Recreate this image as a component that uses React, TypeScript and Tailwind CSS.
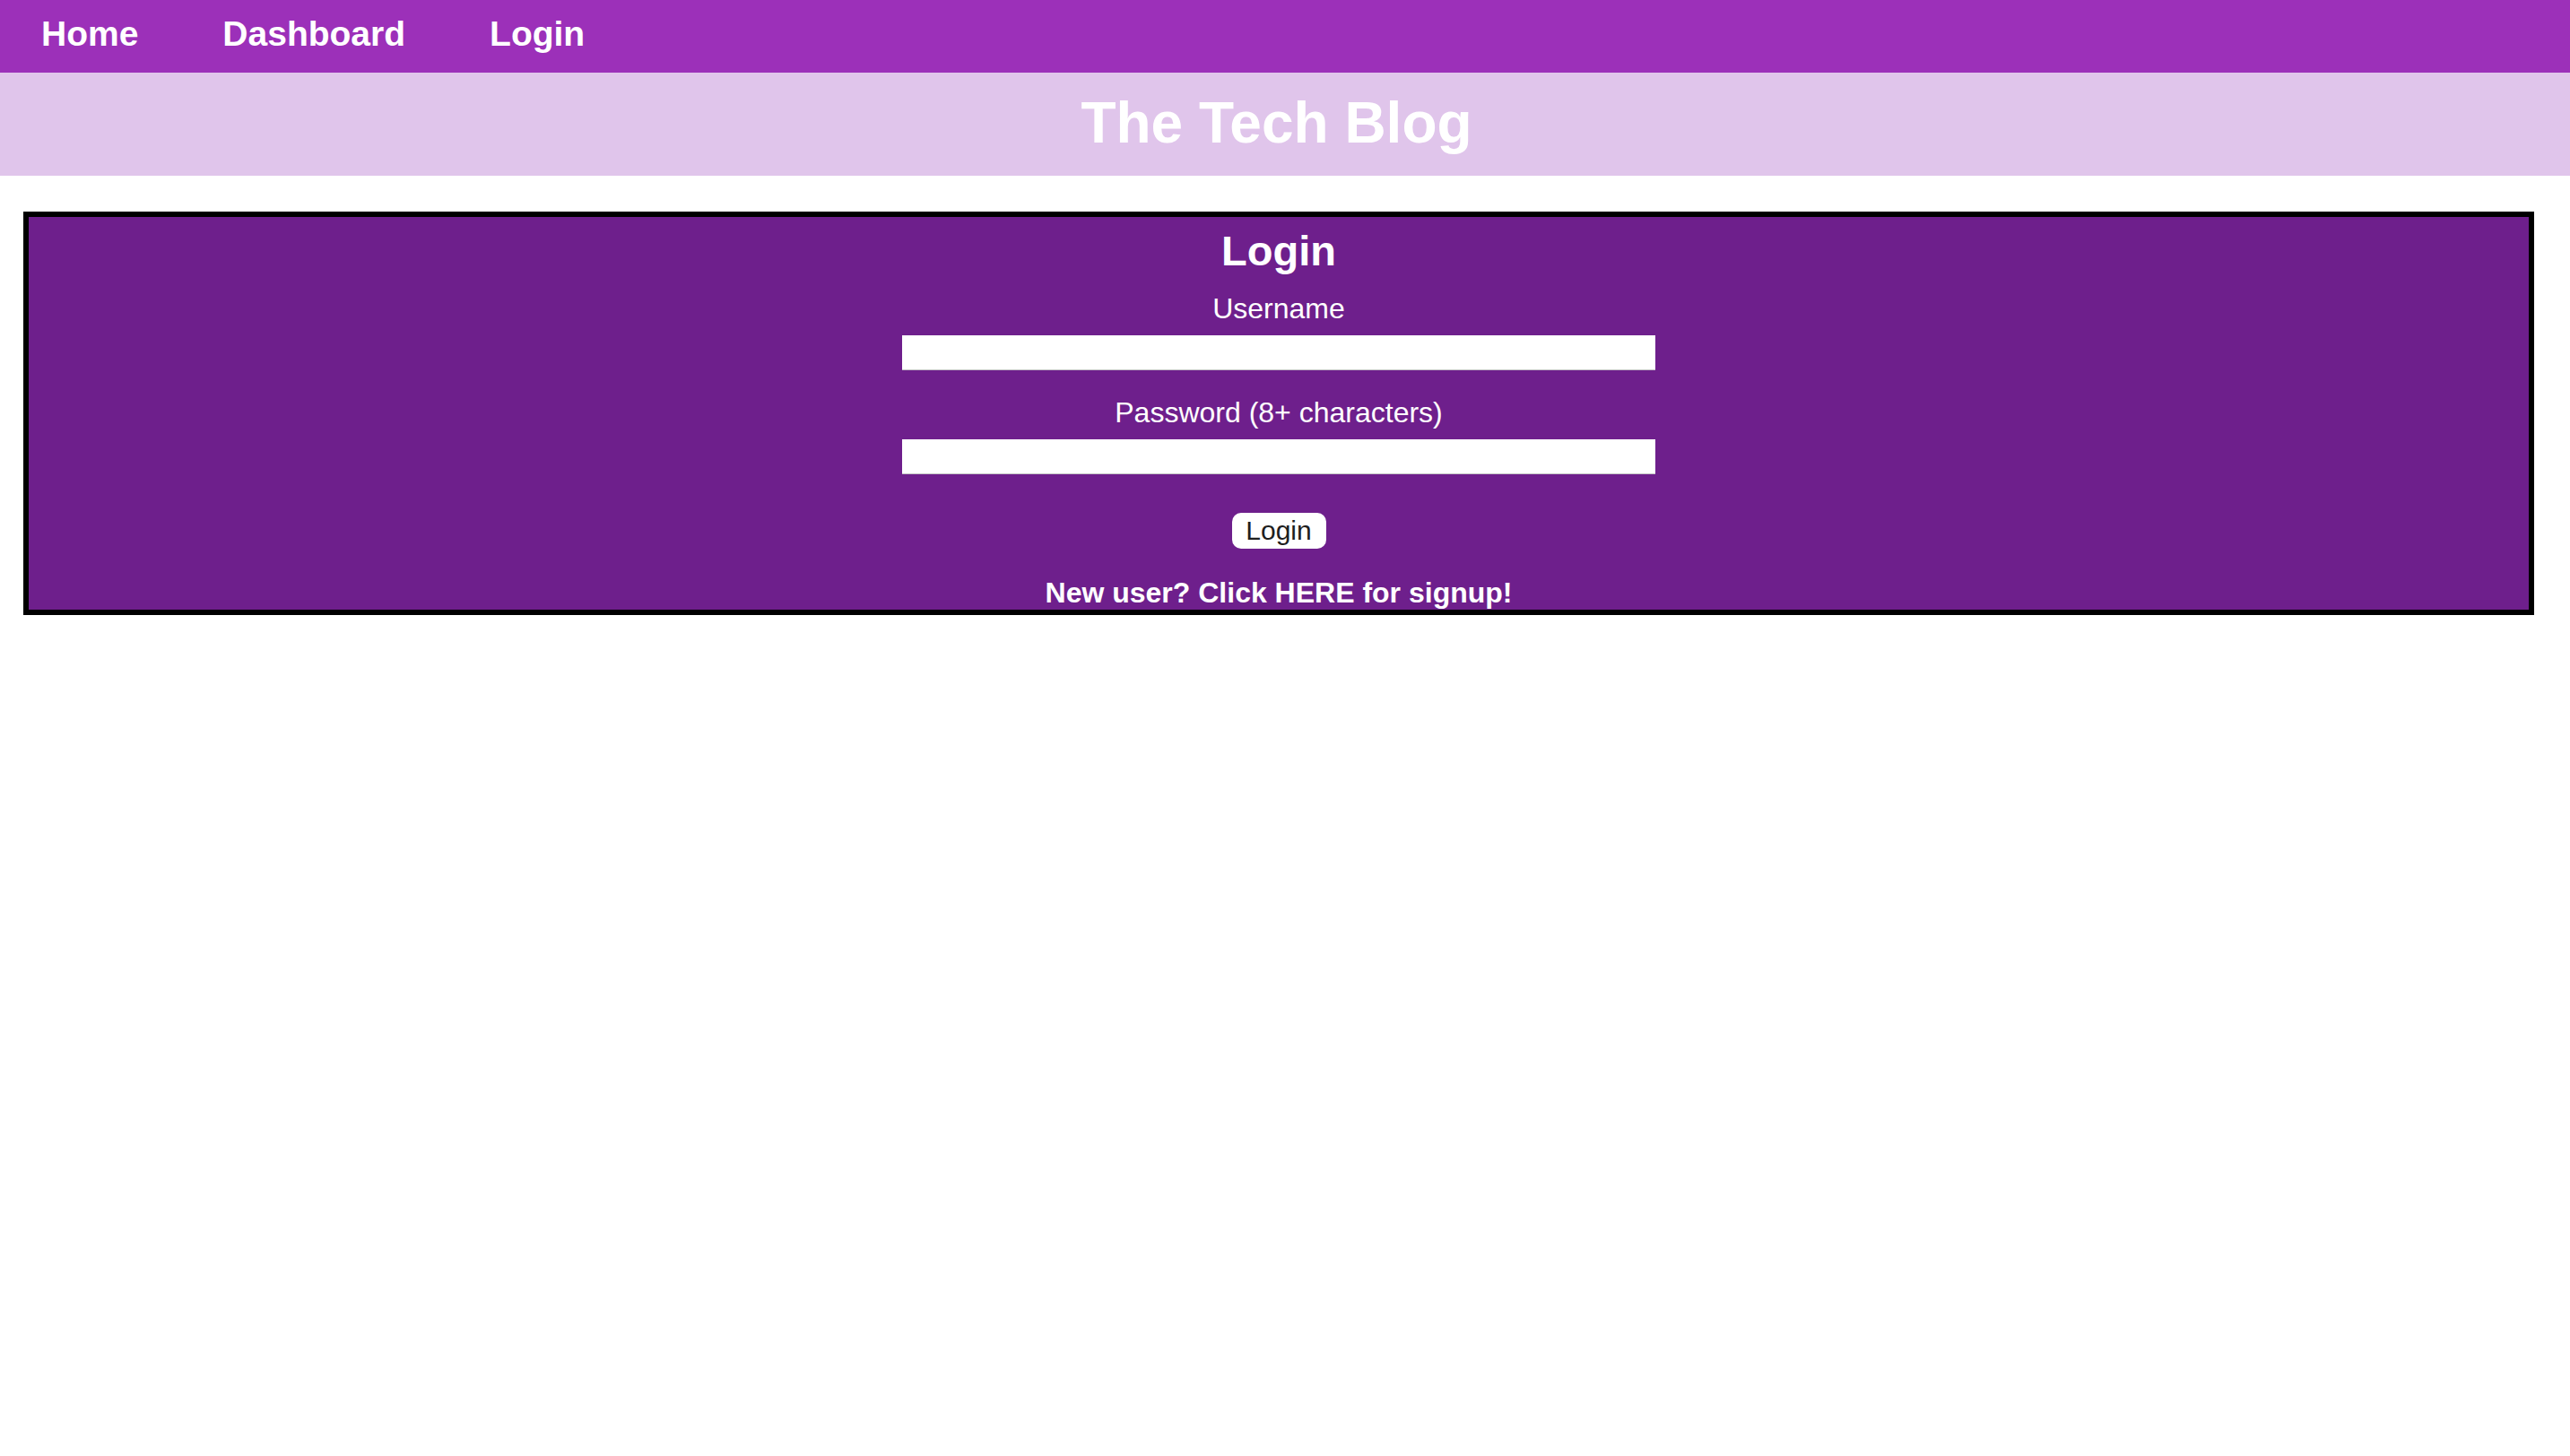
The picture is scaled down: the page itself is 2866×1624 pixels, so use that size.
export default function App() {
  return (
    <div className="min-h-[1624px] bg-white font-['Liberation_Sans',Arial,sans-serif]">
      <nav className="flex h-[81px] items-start gap-[94px] bg-[#9c30b9] pl-[46px] pt-[15px]">
        <a className="text-[39px] font-bold leading-[45px] text-white" href="#">Home</a>
        <a className="text-[39px] font-bold leading-[45px] text-white" href="#">Dashboard</a>
        <a className="text-[39px] font-bold leading-[45px] text-white" href="#">Login</a>
      </nav>
      <header className="flex h-[115px] items-center justify-center bg-[#e0c5eb] pb-[3px] pr-[19px]">
        <h1 className="text-[64px] font-bold leading-[72px] text-white">The Tech Blog</h1>
      </header>
      <main className="ml-[26px] mt-[40px] w-[2800px] border-[6px] border-black bg-[#6e1f8c] pt-[11px]">
        <form className="flex flex-col items-center text-white">
          <h2 className="text-[47px] font-bold leading-[54px]">Login</h2>
          <label className="mt-[19px] text-[32px] leading-[37px]">Username</label>
          <input className="mt-[11px] h-[39px] w-[840px] border-0 border-b border-[#c4c4c4] bg-white outline-none" />
          <label className="mt-[29px] text-[32px] leading-[37px]">Password (8+ characters)</label>
          <input type="password" className="mt-[11px] h-[39px] w-[840px] border-0 border-b border-[#c4c4c4] bg-white outline-none" />
          <button type="button" className="mt-[43px] flex h-[40px] w-[105px] items-center justify-center rounded-[10px] bg-white text-[30px] leading-[34px] text-[#1e1e1e]">Login</button>
          <a href="#" className="mt-[31px] text-[32px] font-bold leading-[37px] text-white">New user? Click HERE for signup!</a>
        </form>
      </main>
    </div>
  );
}
